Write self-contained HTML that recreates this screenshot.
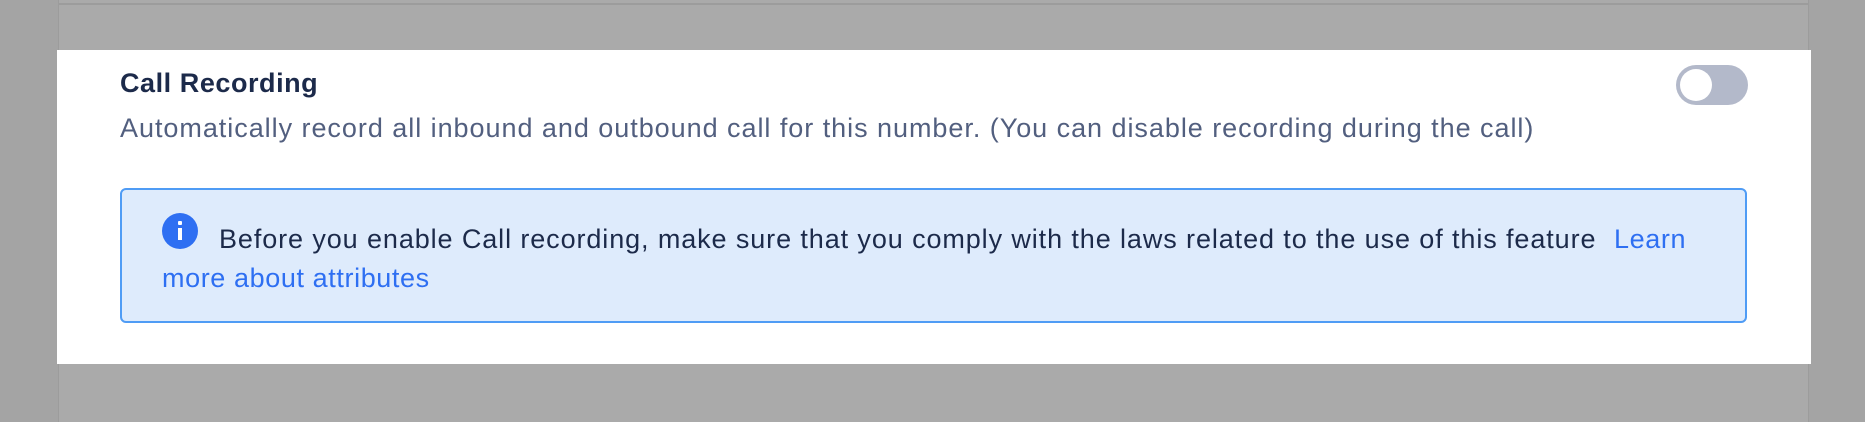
<!DOCTYPE html>
<html><head><meta charset="utf-8"><style>
body{margin:0;width:1865px;height:422px;background:#aaaaaa;position:relative;overflow:hidden;font-family:"Liberation Sans",sans-serif}
.ls{position:absolute;left:0;top:0;width:58px;height:422px;background:#a4a4a4;border-right:1px solid #9c9c9c}
.rs{position:absolute;left:1808px;top:0;width:57px;height:422px;background:#a4a4a4;border-left:1px solid #9c9c9c}
.tl{position:absolute;left:58px;top:3px;width:1750px;height:2px;background:#9c9c9c}
.panel{position:absolute;left:57px;top:50px;width:1754px;height:314px;background:#fff}
.t{position:absolute;left:120px;top:68px;font-size:27px;font-weight:bold;color:#1c2a4a;white-space:nowrap;letter-spacing:0.55px}
.d{position:absolute;left:120px;top:113px;font-size:27px;color:#525f7f;white-space:nowrap;letter-spacing:0.96px}
.tg{position:absolute;left:1676px;top:65px;width:72px;height:40px;border-radius:20px;background:#b3b9ca}
.tg::after{content:"";position:absolute;left:4px;top:4px;width:32px;height:32px;border-radius:50%;background:#fff}
.al{position:absolute;left:120px;top:188px;width:1623px;height:131px;border:2px solid #4f9cf5;border-radius:6px;background:#deebfc}
.ic{position:absolute;left:162px;top:213px;width:36px;height:36px;border-radius:50%;background:#2e6ff2}
.ic::before{content:"";position:absolute;left:16px;top:8px;width:4px;height:4px;background:#fff;border-radius:1px}
.ic::after{content:"";position:absolute;left:16px;top:15px;width:4px;height:12px;background:#fff}
.l1{position:absolute;left:219px;top:224px;font-size:27px;color:#1c2a4a;white-space:nowrap;letter-spacing:0.9px}
.l2{position:absolute;left:162px;top:263px;font-size:27px;color:#2e6ff2;white-space:nowrap;letter-spacing:0.6px}
.lk{position:absolute;left:1614px;top:224px;font-size:27px;color:#2e6ff2;letter-spacing:0.6px}
</style></head><body>
<div class="ls"></div><div class="rs"></div><div class="tl"></div>
<div class="panel"></div>
<div class="t">Call Recording</div>
<div class="d">Automatically record all inbound and outbound call for this number. (You can disable recording during the call)</div>
<div class="tg"></div>
<div class="al"></div>
<div class="ic"></div>
<div class="l1">Before you enable Call recording, make sure that you comply with the laws related to the use of this feature</div>
<div class="lk">Learn</div>
<div class="l2">more about attributes</div>
</body></html>
